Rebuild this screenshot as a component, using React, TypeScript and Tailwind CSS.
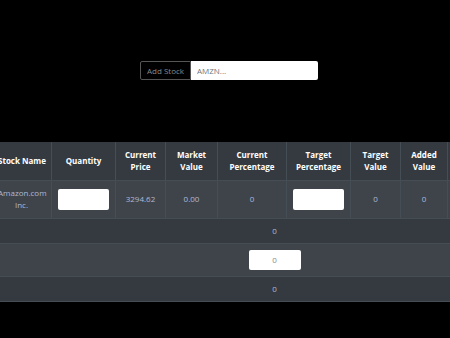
import React from "react";

const headers = [
  ["Stock Name"],
  ["Quantity"],
  ["Current", "Price"],
  ["Market", "Value"],
  ["Current", "Percentage"],
  ["Target", "Percentage"],
  ["Target", "Value"],
  ["Added", "Value"],
  [""],
];

const widths = ["w-[60px]", "w-[64px]", "w-[50px]", "w-[52px]", "w-[69px]", "w-[64px]", "w-[50px]", "w-[47px]", "w-[110px]"];

const cell = "border border-[#454d55] px-[6px] py-[6px] text-center align-middle whitespace-nowrap";

const App: React.FC = () => {
  return (
    <main
      className="min-h-[338px] w-[450px] overflow-hidden bg-black"
      style={{ fontFamily: '"Open Sans", "Noto Sans", sans-serif' }}
    >
      <div className="flex justify-center pl-[8px] pt-[61px]">
        <div className="flex h-[19px] w-[178px] text-[8px]">
          <span className="flex items-center rounded-l-[2px] border border-[#555] bg-black px-[6px] text-[#8a8a8a]">
            Add Stock
          </span>
          <input
            className="min-w-0 flex-1 rounded-r-[2px] bg-white px-[6px] text-[8px] text-[#495057] outline-none placeholder:text-[#6c757d]"
            placeholder="AMZN..."
          />
        </div>
      </div>

      <div className="mt-[62px]">
        <table className="-ml-[9px] w-[566px] table-fixed border-collapse text-[8px] leading-[12px]">
          <colgroup>
            {widths.map((w, i) => (
              <col key={i} className={w} />
            ))}
          </colgroup>
          <thead>
            <tr className="bg-[#343a40] text-white">
              {headers.map((h, i) => (
                <th key={i} className={`${cell} h-[38px] border-t-0 font-bold`}>
                  {h.map((line, j) => (
                    <div key={j}>{line}</div>
                  ))}
                </th>
              ))}
            </tr>
          </thead>
          <tbody className="text-[#aeb9d6]">
            <tr className="h-[38px] bg-[#3e444a]">
              <td className={cell}>
                <div>Amazon.com</div>
                <div>Inc.</div>
              </td>
              <td className={cell}>
                <input className="h-[21px] w-[51px] rounded-[2px] bg-white outline-none" />
              </td>
              <td className={cell}>3294.62</td>
              <td className={cell}>0.00</td>
              <td className={cell}>0</td>
              <td className={cell}>
                <input className="h-[21px] w-[51px] rounded-[2px] bg-white outline-none" />
              </td>
              <td className={cell}>0</td>
              <td className={cell}>0</td>
              <td className={cell}></td>
            </tr>
            <tr className="bg-[#343a40]">
              <td colSpan={9} className={`${cell} border-x-0 py-[4px]`}>
                0
              </td>
            </tr>
            <tr className="bg-[#3e444a]">
              <td colSpan={9} className={`${cell} border-x-0 py-[6px]`}>
                <input
                  className="block mx-auto h-[20px] w-[52px] rounded-[2px] bg-white text-center text-[8px] text-[#8a8a8a] outline-none"
                  defaultValue="0"
                />
              </td>
            </tr>
            <tr className="bg-[#343a40]">
              <td colSpan={9} className={`${cell} border-x-0 py-[5px]`}>
                0
              </td>
            </tr>
          </tbody>
        </table>
      </div>
    </main>
  );
};

export default App;
